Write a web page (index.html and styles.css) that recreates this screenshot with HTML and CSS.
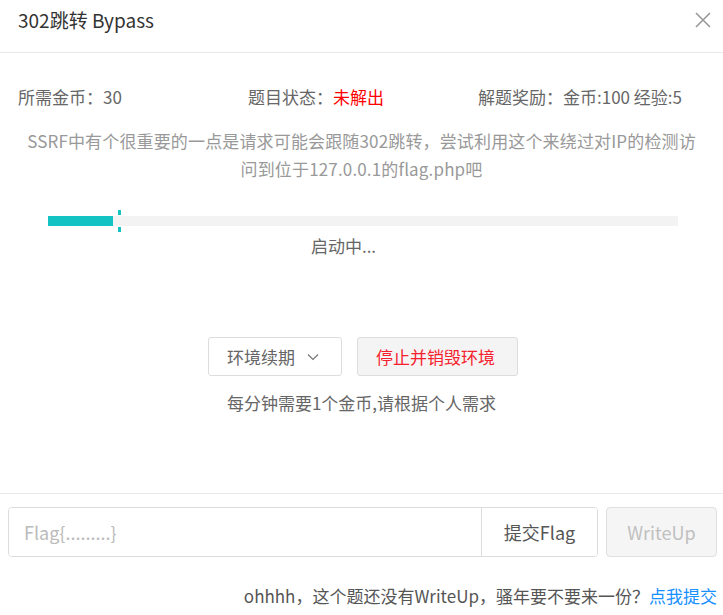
FILE: index.html
```html
<!DOCTYPE html>
<html lang="zh">
<head>
<meta charset="utf-8">
<title>302跳转 Bypass</title>
<link rel="stylesheet" href="styles.css">
</head>
<body>
<div class="modal">
  <div class="header">
    <div class="title">302跳转 Bypass</div>
    <svg class="close" width="16" height="16" viewBox="0 0 16 16"><path d="M1 1L15 15M15 1L1 15" stroke="#999" stroke-width="1.6" fill="none"/></svg>
  </div>
  <div class="body">
    <div class="info">
      <div>所需金币：30</div>
      <div>题目状态：<span class="red">未解出</span></div>
      <div>解题奖励：金币:100 经验:5</div>
    </div>
    <p class="desc">SSRF中有个很重要的一点是请求可能会跟随302跳转，尝试利用这个来绕过对IP的检测访<br>问到位于127.0.0.1的flag.php吧</p>
    <div class="progress">
      <div class="track">
        <div class="fill" style="width:65px"></div>
        <div class="marker" style="left:70px"></div>
      </div>
    </div>
    <div class="status">启动中...</div>
    <div class="actions">
      <button class="btn renew">环境续期 <svg width="12" height="8" viewBox="0 0 12 8"><path d="M1 1.5L6 6.5L11 1.5" stroke="#777" stroke-width="1.2" fill="none"/></svg></button>
      <button class="btn stop">停止并销毁环境</button>
    </div>
    <div class="hint">每分钟需要1个金币,请根据个人需求</div>
  </div>
  <div class="footer">
    <div class="submit-row">
      <div class="group">
        <input class="flag" type="text" placeholder="Flag{.........}">
        <button class="submit">提交Flag</button>
      </div>
      <button class="writeup">WriteUp</button>
    </div>
    <div class="note">ohhhh，这个题还没有WriteUp，骚年要不要来一份？<a class="link">点我提交</a></div>
  </div>
</div>
</body>
</html>
```
FILE: styles.css
```css
* { box-sizing: border-box; }
html, body { margin: 0; padding: 0; background: #fff; }
body {
  font-family: "Noto Sans CJK SC", "Noto Sans", sans-serif;
  color: #666;
  font-size: 17px;
}
.modal { width: 723px; height: 615px; }
.header {
  height: 53px;
  border-bottom: 1px solid #e8e8e8;
  display: flex;
  justify-content: space-between;
  align-items: flex-start;
  padding: 7px 12px 0 18px;
}
.title { font-size: 19px; line-height: 26px; color: #333; }
.close { margin-top: 5px; }
.body { padding-top: 32px; height: 440px; }
.info {
  display: grid;
  grid-template-columns: 230px 230px 1fr;
  padding-left: 18px;
  line-height: 24px;
}
.red { color: #ff0000; }
.desc {
  margin: 18px 0 0;
  text-align: center;
  color: #999;
  line-height: 28px;
  white-space: nowrap;
  letter-spacing: 0.15px;
}
.progress { margin: 33px 45px 0 48px; }
.track { position: relative; height: 10px; background: #f3f3f3; }
.fill { height: 10px; background: #13c2c2; }
.marker {
  position: absolute;
  top: -6px;
  width: 3px;
  height: 22px;
  background: linear-gradient(#13c2c2 0 5px, transparent 5px 17px, #13c2c2 17px);
}
.status { text-align: center; line-height: 24px; margin-top: 8px; padding-right: 36px; }
.actions {
  display: flex;
  justify-content: center;
  gap: 15px;
  margin-top: 79px;
  padding-left: 3px;
}
.btn {
  font-family: inherit;
  font-size: 17px;
  height: 39px;
  border: 1px solid #ddd;
  border-radius: 3px;
  padding: 0 18px;
  display: flex;
  align-items: center;
  gap: 12px;
}
.renew { background: #fff; color: #666; width: 134px; }
.stop { background: #f4f4f4; color: #f5222d; width: 161px; }
.hint { text-align: center; line-height: 24px; margin-top: 15px; }
.footer { border-top: 1px solid #e8e8e8; padding: 13px 6px 0 8px; }
.submit-row { display: flex; gap: 8px; }
.group {
  display: flex;
  width: 590px;
  height: 50px;
  border: 1px solid #dcdcdc;
  border-radius: 4px;
  overflow: hidden;
}
.flag {
  flex: 1;
  border: 0;
  outline: none;
  font-family: inherit;
  font-size: 18px;
  padding: 0 15px;
  color: #666;
}
.flag::placeholder { color: #bbb; }
.submit {
  width: 116px;
  border: 0;
  border-left: 1px solid #dcdcdc;
  background: #fff;
  font-family: inherit;
  font-size: 18px;
  color: #555;
}
.writeup {
  width: 111px;
  height: 50px;
  border: 1px solid #e0e0e0;
  border-radius: 4px;
  background: #f5f5f5;
  font-family: inherit;
  font-size: 18px;
  color: #c0c0c0;
}
.note {
  text-align: right;
  margin-top: 26px;
  line-height: 26px;
  color: #555;
  white-space: nowrap;
}
.link { color: #1890ff; }
```
